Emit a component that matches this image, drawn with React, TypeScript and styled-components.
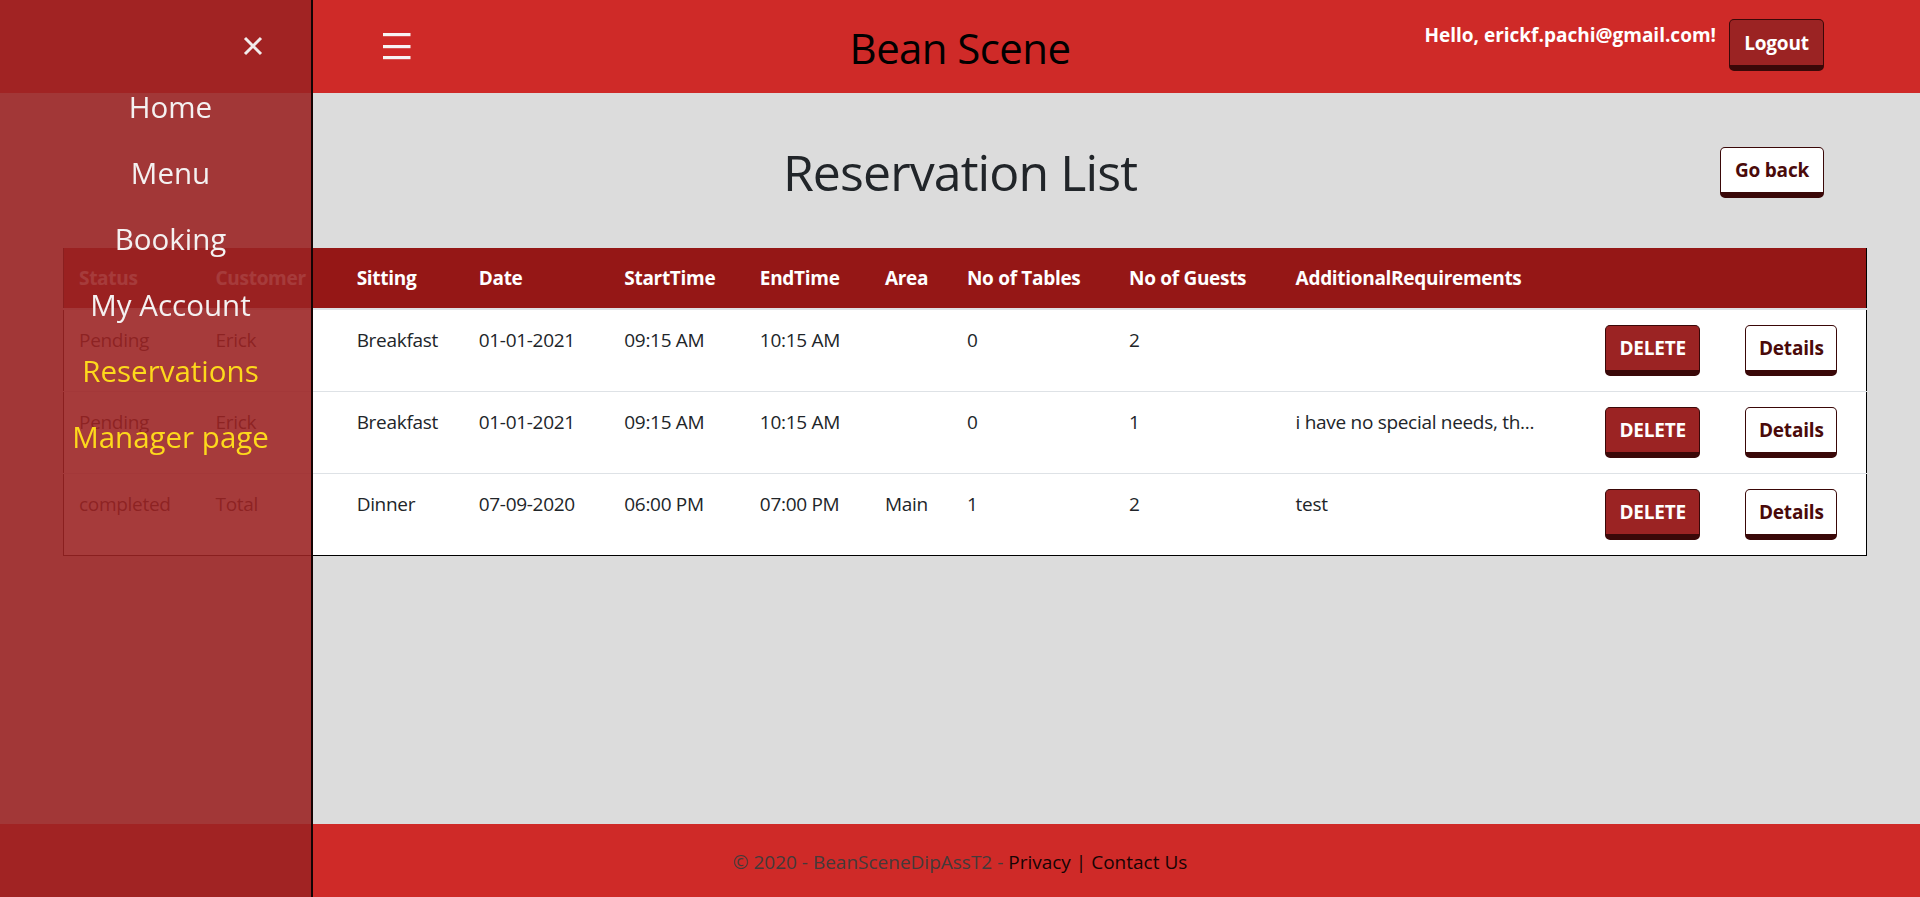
import React from 'react';
import styled, { createGlobalStyle, css } from 'styled-components';

const GlobalStyle = createGlobalStyle`
  html, body { margin: 0; padding: 0; }
  body {
    font-family: "Open Sans", "Noto Sans", sans-serif;
    background: #dcdcdc;
    color: #212529;
  }
  *, *::before, *::after { box-sizing: border-box; }
`;

const RED = '#cf2a28';
const DARK = '#3a0808';

const Page = styled.div`
  min-height: 100vh;
  display: flex;
  flex-direction: column;
`;

const TopBar = styled.header`
  height: 93px;
  background: ${RED};
  display: grid;
  grid-template-columns: 1fr auto 1fr;
  align-items: center;
`;

const BarLeft = styled.div`
  display: flex;
  align-items: center;
  padding-left: 383px;
`;

const MenuToggle = styled.button`
  width: 28px;
  height: 27px;
  padding: 0;
  border: 0;
  background: transparent;
  display: block;
  cursor: pointer;
`;

const Brand = styled.div`
  font-size: 42px;
  letter-spacing: -0.6px;
  color: #000;
  line-height: 1;
  padding-top: 2px;
`;

const BarRight = styled.div`
  align-self: start;
  display: flex;
  justify-content: flex-end;
  align-items: flex-start;
  padding: 19px 96px 0 0;
  gap: 13px;
`;

const Greeting = styled.span`
  color: #fff;
  font-weight: 700;
  font-size: 19px;
  line-height: 30px;
  margin-top: 1px;
  white-space: nowrap;
`;

const ActionButton = styled.button<{ $variant: 'dark' | 'light'; $w: number; $h?: number }>`
  width: ${(p) => p.$w}px;
  height: ${(p) => p.$h ?? 51}px;
  border: 1px solid ${DARK};
  border-bottom-width: 6px;
  border-radius: 5px;
  font-family: inherit;
  font-weight: 700;
  font-size: 19px;
  letter-spacing: -0.2px;
  display: inline-flex;
  align-items: center;
  justify-content: center;
  padding: 0;
  cursor: pointer;
  ${(p) =>
    p.$variant === 'dark'
      ? css`
          background: #9b2323;
          color: #fff;
        `
      : css`
          background: #fff;
          color: #4a0a0a;
        `}
`;

const Main = styled.main`
  flex: 1;
`;

const TitleRow = styled.div`
  display: grid;
  grid-template-columns: 1fr auto 1fr;
  align-items: center;
  height: 60px;
  margin-top: 49px;
  padding: 0 96px;
`;

const PageTitle = styled.h1`
  grid-column: 2;
  margin: 0;
  font-size: 50px;
  font-weight: 400;
  letter-spacing: -0.9px;
  line-height: 60px;
  color: #212529;
`;

const BackSlot = styled.div`
  grid-column: 3;
  display: flex;
  justify-content: flex-end;
`;

const TableWrap = styled.div`
  margin-top: 46px;
  padding-left: 63px;
`;

const Table = styled.table`
  width: 1804px;
  table-layout: fixed;
  border-collapse: collapse;
  border-left: 1px solid #000;
  border-right: 1px solid #000;
  border-bottom: 1px solid #000;
  background: #fff;
  font-size: 19px;
  letter-spacing: -0.3px;
`;

const HeadCell = styled.th`
  background: #951716;
  color: #fff;
  font-weight: 700;
  text-align: left;
  padding: 15px;
  line-height: 30px;
  white-space: nowrap;
  overflow: hidden;
  border-bottom: 2px solid #dee2e6;
  vertical-align: top;
`;

const Cell = styled.td`
  padding: 15px;
  line-height: 30px;
  vertical-align: top;
  white-space: nowrap;
  overflow: hidden;
  border-top: 1px solid #dee2e6;
  color: #212529;
`;

const Footer = styled.footer`
  height: 73px;
  background: ${RED};
  text-align: center;
  font-size: 19px;
  line-height: 67px;
  padding-top: 5px;
`;

const Muted = styled.span`
  color: #443a3a;
`;

const Divider = styled.span`
  color: #160404;
`;

const FooterLink = styled.a`
  color: #160404;
  text-decoration: none;
`;

const Sidebar = styled.nav`
  position: fixed;
  top: 0;
  left: 0;
  bottom: 0;
  width: 313px;
  border-right: 2px solid #140404;
  background: rgba(155, 35, 35, 0.89);
  padding-top: 74px;
  z-index: 10;
`;

const CloseButton = styled.button`
  position: absolute;
  top: 36px;
  right: 48px;
  width: 20px;
  height: 20px;
  padding: 0;
  border: 0;
  background: transparent;
  cursor: pointer;
`;

const NavLink = styled.a<{ $accent?: boolean }>`
  display: block;
  padding: 10px 10px 10px 40px;
  text-align: center;
  font-size: 29.5px;
  line-height: 46px;
  color: ${(p) => (p.$accent ? '#fdd91c' : '#f4f1f1')};
  text-decoration: none;
  white-space: nowrap;
`;

const columns = [137, 141, 122, 145.5, 135.5, 125, 82, 162, 166.5, 309.5, 140, 136];
const headers = [
  'Status',
  'Customer',
  'Sitting',
  'Date',
  'StartTime',
  'EndTime',
  'Area',
  'No of Tables',
  'No of Guests',
  'AdditionalRequirements',
  '',
  '',
];

const rows = [
  ['Pending', 'Erick', 'Breakfast', '01-01-2021', '09:15 AM', '10:15 AM', '', '0', '2', ''],
  ['Pending', 'Erick', 'Breakfast', '01-01-2021', '09:15 AM', '10:15 AM', '', '0', '1', 'i have no special needs, th...'],
  ['completed', 'Total', 'Dinner', '07-09-2020', '06:00 PM', '07:00 PM', 'Main', '1', '2', 'test'],
];

const navItems = [
  { label: 'Home' },
  { label: 'Menu' },
  { label: 'Booking' },
  { label: 'My Account' },
  { label: 'Reservations', accent: true },
  { label: 'Manager page', accent: true },
];

const HamburgerIcon = () => (
  <svg width="28" height="27" viewBox="0 0 28 27" aria-hidden="true">
    <rect x="0" y="0" width="27.5" height="3.2" fill="#f7f4f4" />
    <rect x="0" y="12" width="27.5" height="3.2" fill="#f7f4f4" />
    <rect x="0" y="23" width="27.5" height="3.2" fill="#f7f4f4" />
  </svg>
);

const CloseIcon = () => (
  <svg width="20" height="20" viewBox="0 0 20 20" aria-hidden="true">
    <path d="M2 2 L18 18 M18 2 L2 18" stroke="#f2ecec" strokeWidth="3" strokeLinecap="butt" />
  </svg>
);

export default function App() {
  return (
    <>
      <GlobalStyle />
      <Page>
        <TopBar>
          <BarLeft>
            <MenuToggle aria-label="Open menu">
              <HamburgerIcon />
            </MenuToggle>
          </BarLeft>
          <Brand>Bean Scene</Brand>
          <BarRight>
            <Greeting>Hello, erickf.pachi@gmail.com!</Greeting>
            <ActionButton $variant="dark" $w={95} $h={52}>
              Logout
            </ActionButton>
          </BarRight>
        </TopBar>

        <Main>
          <TitleRow>
            <PageTitle>Reservation List</PageTitle>
            <BackSlot>
              <ActionButton $variant="light" $w={104}>
                Go back
              </ActionButton>
            </BackSlot>
          </TitleRow>

          <TableWrap>
            <Table>
              <colgroup>
                {columns.map((w, i) => (
                  <col key={i} style={{ width: w }} />
                ))}
              </colgroup>
              <thead>
                <tr>
                  {headers.map((h, i) => (
                    <HeadCell key={i}>{h}</HeadCell>
                  ))}
                </tr>
              </thead>
              <tbody>
                {rows.map((r, ri) => (
                  <tr key={ri}>
                    {r.map((c, ci) => (
                      <Cell key={ci}>{c}</Cell>
                    ))}
                    <Cell>
                      <ActionButton $variant="dark" $w={95}>
                        DELETE
                      </ActionButton>
                    </Cell>
                    <Cell>
                      <ActionButton $variant="light" $w={92}>
                        Details
                      </ActionButton>
                    </Cell>
                  </tr>
                ))}
              </tbody>
            </Table>
          </TableWrap>
        </Main>

        <Footer>
          <Muted>© 2020 - BeanSceneDipAssT2 - </Muted>
          <FooterLink href="#">Privacy</FooterLink>
          <Divider> | </Divider>
          <FooterLink href="#">Contact Us</FooterLink>
        </Footer>

        <Sidebar>
          <CloseButton aria-label="Close menu">
            <CloseIcon />
          </CloseButton>
          {navItems.map((n) => (
            <NavLink key={n.label} href="#" $accent={n.accent}>
              {n.label}
            </NavLink>
          ))}
        </Sidebar>
      </Page>
    </>
  );
}
